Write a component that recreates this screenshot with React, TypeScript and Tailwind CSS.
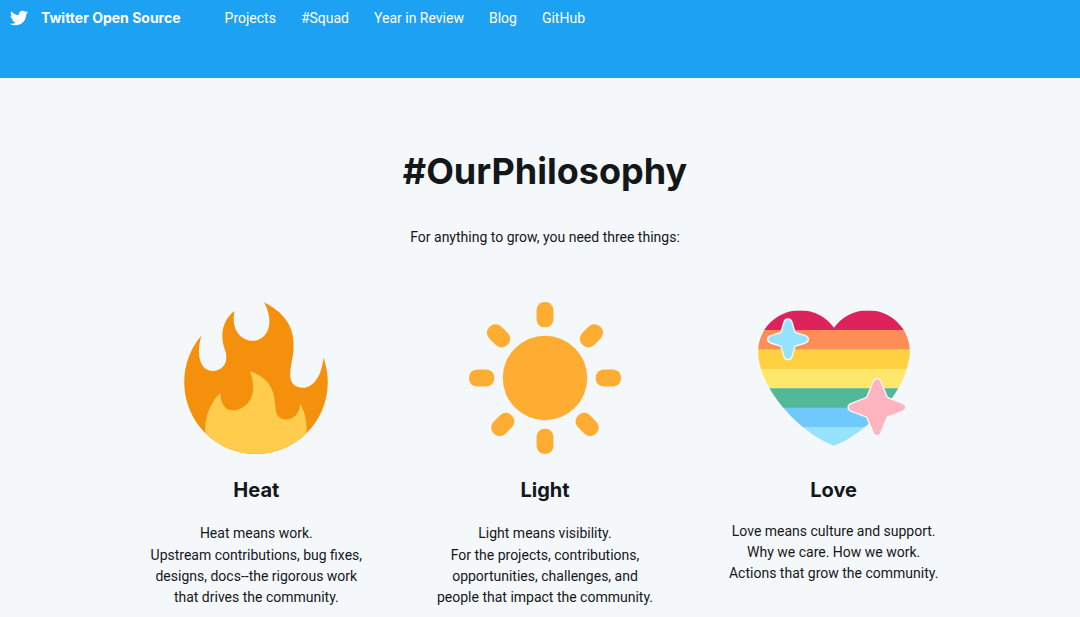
import type { ReactNode } from 'react';

const navLinks = ['Projects', '#Squad', 'Year in Review', 'Blog', 'GitHub'];

function TwitterBird() {
  return (
    <svg viewBox="0 0 24 24" className="h-[18px] w-[18px] fill-white" aria-hidden="true">
      <path d="M23.954 4.569c-.885.389-1.83.654-2.825.775 1.014-.611 1.794-1.574 2.163-2.723-.951.555-2.005.959-3.127 1.184-.896-.959-2.173-1.559-3.591-1.559-2.717 0-4.92 2.203-4.92 4.917 0 .39.045.765.127 1.124C7.691 8.094 4.066 6.13 1.64 3.161c-.427.722-.666 1.561-.666 2.475 0 1.71.87 3.213 2.188 4.096-.807-.026-1.566-.248-2.228-.616v.061c0 2.385 1.693 4.374 3.946 4.827-.413.111-.849.171-1.296.171-.314 0-.615-.03-.916-.086.631 1.953 2.445 3.377 4.604 3.417-1.68 1.319-3.809 2.105-6.102 2.105-.39 0-.779-.023-1.17-.067 2.189 1.394 4.768 2.209 7.557 2.209 9.054 0 13.999-7.496 13.999-13.986 0-.209 0-.42-.015-.63.961-.689 1.8-1.56 2.46-2.548l-.047-.02z" />
    </svg>
  );
}

function Fire() {
  return (
    <svg viewBox="0 0 36 36" className="size-38" aria-hidden="true">
      <path
        fill="#F4900C"
        d="M35 19c0-2.062-.367-4.039-1.04-5.868-.46 5.389-3.333 8.157-6.335 6.868-2.812-1.208-.917-5.917-.777-8.164.236-3.809-.012-8.169-6.931-11.794 2.875 5.5.333 8.917-2.333 9.125-2.958.231-5.667-2.542-4.667-7.042-3.238 2.386-3.332 6.402-2.333 9 1.042 2.708-.042 4.958-2.583 5.208-2.84.28-4.418-3.041-2.963-8.333C2.52 10.965 1 14.805 1 19c0 9.389 7.611 17 17 17s17-7.611 17-17z"
      />
      <path
        fill="#FFCC4D"
        d="M28.394 23.999c.148 3.084-2.561 4.293-4.019 3.709-2.106-.843-1.541-2.291-2.083-5.291s-2.625-5.083-5.708-6c2.25 6.333-1.247 8.667-3.08 9.084-1.872.426-3.753-.001-3.968-4.007C7.352 23.668 6 26.676 6 30c0 .368.023.73.055 1.09C9.125 34.124 13.342 36 18 36s8.875-1.876 11.945-4.91c.032-.36.055-.722.055-1.09 0-2.187-.584-4.236-1.606-6.001z"
      />
    </svg>
  );
}

function Sun() {
  return (
    <svg viewBox="0 0 36 36" className="size-38" fill="#FFAC33" aria-hidden="true">
      <circle cx="18" cy="18" r="10" />
      <path d="M16 2s0-2 2-2 2 2 2 2v2s0 2-2 2-2-2-2-2V2z" />
      <path d="M16 32s0-2 2-2 2 2 2 2v2s0 2-2 2-2-2-2-2v-2z" />
      <path d="M34 16s2 0 2 2-2 2-2 2h-2s-2 0-2-2 2-2 2-2h2z" />
      <path d="M4 16s2 0 2 2-2 2-2 2H2s-2 0-2-2 2-2 2-2h2z" />
      <path d="M9.121 7.293s1.414 1.414 0 2.828-2.828 0-2.828 0L4.878 8.708s-1.414-1.414 0-2.829c1.415-1.414 2.829 0 2.829 0l1.414 1.414z" />
      <path d="M30.121 28.293s1.414 1.414 0 2.828-2.828 0-2.828 0l-1.414-1.414s-1.414-1.414 0-2.828 2.828 0 2.828 0l1.414 1.414z" />
      <path d="M29.708 10.121s-1.414 1.414-2.828 0 0-2.828 0-2.828l1.414-1.414s1.414-1.414 2.828 0 0 2.828 0 2.828l-1.414 1.414z" />
      <path d="M8.708 31.121s-1.414 1.414-2.828 0 0-2.828 0-2.828l1.414-1.414s1.414-1.414 2.828 0 0 2.828 0 2.828l-1.414 1.414z" />
    </svg>
  );
}

const stripes = ['#DE235C', '#FF8D57', '#FFD040', '#FFE76C', '#52B898', '#70C9FA', '#96E3FF'];

function Heart() {
  return (
    <svg viewBox="0 0 36 36" className="size-38" aria-hidden="true">
      <clipPath id="heart-shape">
        <path d="M35.985 11.833c0-5.45-4.418-9.868-9.967-9.868-3.308 0-6.227 1.633-8.018 4.129-1.791-2.496-4.71-4.129-8.017-4.129-5.45 0-9.968 4.417-9.968 9.868 0 .772.098 1.52.266 2.241C1.751 22.587 11.216 31.568 18 34.034c6.783-2.466 16.249-11.447 17.617-19.959.27-.721.368-1.469.368-2.242z" />
      </clipPath>
      <g clipPath="url(#heart-shape)">
        {stripes.map((color, i) => (
          <rect key={color} x="0" y={2.03 + i * 4.6} width="36" height="4.7" fill={color} />
        ))}
      </g>
      <g strokeLinejoin="round" stroke="#F5F8FA" strokeWidth="4" transform="scale(.07895) translate(-36 -36)">
        <path
          fill="#96E3FF"
          d="M114 96C118 84 134 84 138 96L147 127L178 137C190 141 190 155 178 159L147 169L138 200C134 212 118 212 114 200L105 169L74 159C62 155 62 141 74 137L105 127Z"
        />
        <path
          fill="#FFB5C0"
          d="M381 276C384 263 402 263 405 276L424 322L470 340C483 344 483 360 470 364L424 381L405 427C402 440 384 440 381 427L362 381L316 364C303 360 303 344 316 340L362 322Z"
        />
      </g>
    </svg>
  );
}

function Pillar({ icon, title, children }: { icon: ReactNode; title: string; children: ReactNode }) {
  return (
    <article className="flex flex-col items-center text-center">
      {icon}
      <h2 className="mt-5 font-[Inter,sans-serif] text-xl leading-8 font-bold">{title}</h2>
      <div className="mt-[15px] text-sm leading-[21px]">{children}</div>
    </article>
  );
}

export default function App() {
  return (
    <div className="min-h-screen bg-[#F5F8FA] font-[Roboto,'Liberation_Sans',sans-serif] text-[#14171A]">
      <header className="h-[78px] bg-[#1DA1F2] text-sm text-white">
        <nav className="flex h-9 items-center pl-2.5">
          <a href="#home" className="flex items-center gap-[13px] font-[Inter,sans-serif] font-bold">
            <TwitterBird />
            Twitter Open Source
          </a>
          <ul className="ml-11 flex gap-[25px]">
            {navLinks.map((link) => (
              <li key={link}>
                <a href="#nav">{link}</a>
              </li>
            ))}
          </ul>
        </nav>
      </header>
      <main className="pt-[69px] pl-2.5">
        <h1 className="text-center font-[Inter,sans-serif] text-4xl leading-12 font-bold">#OurPhilosophy</h1>
        <p className="mt-8 text-center text-sm leading-[21px]">For anything to grow, you need three things:</p>
        <section className="mx-auto mt-[54px] grid max-w-[866px] grid-cols-3">
          <Pillar icon={<Fire />} title="Heat">
            <p className="leading-6">Heat means work.</p>
            <p>
              Upstream contributions, bug fixes,
              <br />
              designs, docs--the rigorous work
              <br />
              that drives the community.
            </p>
          </Pillar>
          <Pillar icon={<Sun />} title="Light">
            <p className="leading-6">Light means visibility.</p>
            <p>
              For the projects, contributions,
              <br />
              opportunities, challenges, and
              <br />
              people that impact the community.
            </p>
          </Pillar>
          <Pillar icon={<Heart />} title="Love">
            <p>
              Love means culture and support.
              <br />
              Why we care. How we work.
              <br />
              Actions that grow the community.
            </p>
          </Pillar>
        </section>
      </main>
    </div>
  );
}
